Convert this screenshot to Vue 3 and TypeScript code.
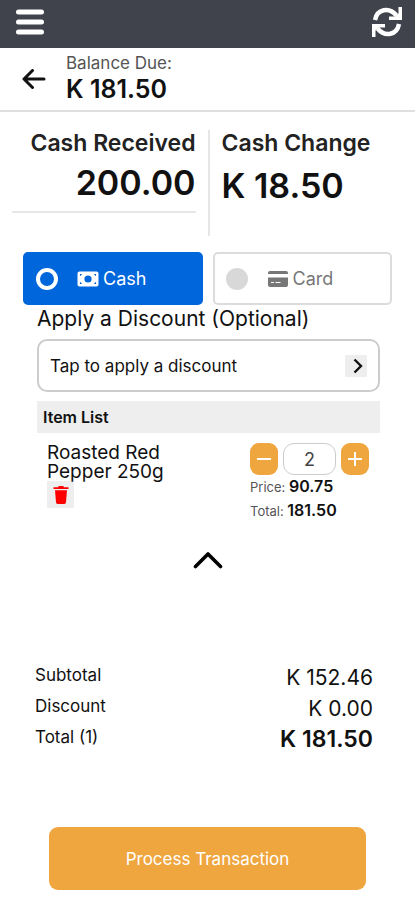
<script setup lang="ts">
import { computed, ref } from 'vue'

const total = 181.5
const price = 90.75
const received = ref('200.00')
const method = ref<'cash' | 'card'>('cash')
const quantity = ref('2')

const change = computed(() => (Number(received.value) - total).toFixed(2))

const summary = [
  { label: 'Subtotal', value: 'K 152.46', strong: false },
  { label: 'Discount', value: 'K 0.00', strong: false },
  { label: 'Total (1)', value: 'K 181.50', strong: true },
]
</script>

<template>
  <div class="page">
    <nav class="topbar">
      <button class="plain" type="button" aria-label="Menu">
        <svg width="28" height="28" viewBox="0 0 28 28">
          <path d="M2.5 4h23M2.5 14h23M2.5 24h23" stroke="#fff" stroke-width="5" stroke-linecap="round" />
        </svg>
      </button>
      <button class="plain" type="button" aria-label="Refresh">
        <svg width="32" height="32" viewBox="0 0 32 32" fill="none" stroke="#fff" stroke-width="4.4">
          <path d="M4 14C6 3 18 .5 25.500 9.500" />
          <path d="M28 18C26 29 14 31.500 6.500 22.500" />
          <path d="M27.500 1H31v13H18v-3.500h6l3.500-3z" fill="#fff" stroke="none" />
          <path d="M4.500 31H1V18h13v3.500H8l-3.500 3z" fill="#fff" stroke="none" />
        </svg>
      </button>
    </nav>

    <header class="balance">
      <button class="plain" type="button" aria-label="Back">
        <svg width="24" height="20" viewBox="0 0 24 20" fill="none" stroke="#111" stroke-width="3" stroke-linecap="round" stroke-linejoin="round">
          <path d="M22 10H2M10.500 1.500L2 10l8.500 8.500" />
        </svg>
      </button>
      <div class="balance-text">
        <div class="balance-label">Balance Due:</div>
        <div class="balance-value">K {{ total.toFixed(2) }}</div>
      </div>
    </header>

    <main>
      <section class="amounts">
        <div class="received">
          <label for="received">Cash Received</label>
          <input id="received" v-model="received" type="text" inputmode="decimal" />
        </div>
        <div class="change">
          <div class="change-label">Cash Change</div>
          <div class="change-value">K {{ change }}</div>
        </div>
      </section>

      <section class="methods">
        <label class="method" :class="{ active: method === 'cash' }">
          <input v-model="method" type="radio" name="method" value="cash" />
          <svg width="22" height="16" viewBox="0 0 22 16">
            <rect x=".5" y=".5" width="21" height="15" rx="2" fill="#fff" />
            <circle cx="11" cy="8" r="3.6" fill="#0066db" />
            <path d="M3 3h2.200L3 5.200zM19 3v2.200L16.800 3zM3 13v-2.200L5.200 13zM19 13h-2.200l2.200-2.200z" fill="#0066db" />
          </svg>
          <span>Cash</span>
        </label>
        <label class="method" :class="{ active: method === 'card' }">
          <input v-model="method" type="radio" name="method" value="card" />
          <svg width="22" height="16" viewBox="0 0 22 16">
            <path d="M1 3V2a2 2 0 0 1 2-2h16a2 2 0 0 1 2 2v1zM1 6.500h20V14a2 2 0 0 1-2 2H3a2 2 0 0 1-2-2z" fill="#777" />
            <path d="M4 11.500h3M8.500 11.500h5" stroke="#fff" stroke-width="1.2" />
          </svg>
          <span>Card</span>
        </label>
      </section>

      <section class="order">
        <h2>Apply a Discount (Optional)</h2>
        <button class="discount" type="button">
          <span>Tap to apply a discount</span>
          <span class="chevron">
            <svg width="10" height="16" viewBox="0 0 10 16" fill="none" stroke="#111" stroke-width="2.4">
              <path d="M1.500 1.500L8 8l-6.500 6.500" />
            </svg>
          </span>
        </button>

        <h3>Item List</h3>
        <div class="item">
          <div class="item-info">
            <div class="item-name">Roasted Red Pepper 250g</div>
            <button class="remove" type="button" aria-label="Remove item">
              <svg width="16" height="18" viewBox="0 0 16 18" fill="#f00">
                <path d="M5 1.200L5.800 0h4.400l.8 1.200h4.500V3H.5V1.200zM2 4.200h12L13 16.300A1.700 1.700 0 0 1 11.300 18H4.700A1.700 1.700 0 0 1 3 16.300z" />
              </svg>
            </button>
          </div>
          <div class="item-amounts">
            <div class="stepper">
              <button type="button" aria-label="Decrease quantity">
                <svg width="14" height="14" viewBox="0 0 14 14"><path d="M0 7h14" stroke="#fff" stroke-width="2" /></svg>
              </button>
              <input v-model="quantity" type="text" inputmode="numeric" aria-label="Quantity" />
              <button type="button" aria-label="Increase quantity">
                <svg width="14" height="14" viewBox="0 0 14 14"><path d="M0 7h14M7 0v14" stroke="#fff" stroke-width="2" /></svg>
              </button>
            </div>
            <div class="prices">
              <div>Price: <b>{{ price.toFixed(2) }}</b></div>
              <div>Total: <b>{{ total.toFixed(2) }}</b></div>
            </div>
          </div>
        </div>
      </section>

      <button class="plain collapse" type="button" aria-label="Collapse">
        <svg width="30" height="18" viewBox="0 0 30 18" fill="none" stroke="#000" stroke-width="3.6" stroke-linecap="round" stroke-linejoin="round">
          <path d="M2.500 15.500L15 3l12.500 12.500" />
        </svg>
      </button>

      <dl class="summary">
        <div v-for="row in summary" :key="row.label">
          <dt>{{ row.label }}</dt>
          <dd :class="{ strong: row.strong }">{{ row.value }}</dd>
        </div>
      </dl>

      <button class="process" type="button">Process Transaction</button>
    </main>
  </div>
</template>

<style>
body {
  background: #fff;
}
</style>

<style scoped>
.page,
.page * {
  box-sizing: border-box;
}
.page {
  color: #111;
  font-family: Inter, 'Liberation Sans', sans-serif;
}
button,
input {
  margin: 0;
  font-family: inherit;
  color: inherit;
}
button {
  border: 0;
  padding: 0;
  cursor: pointer;
}
svg {
  display: block;
}
.plain {
  background: none;
}
.topbar {
  display: flex;
  align-items: center;
  justify-content: space-between;
  height: 48px;
  padding: 0 12px 4px 16px;
  background: #40434c;
}
.balance {
  display: flex;
  align-items: center;
  gap: 20px;
  height: 64px;
  padding: 0 22px;
  border-bottom: 2px solid #e0e0e0;
}
.balance-text {
  padding-bottom: 4px;
}
.balance-label {
  font-size: 17px;
  line-height: 24px;
  color: #555;
}
.balance-value {
  font-size: 25px;
  line-height: 28px;
  font-weight: 600;
}
.amounts {
  display: grid;
  grid-template-columns: 1fr 1fr;
  padding-top: 18px;
}
.received {
  display: flex;
  flex-direction: column;
  padding: 0 12px;
}
.received label,
.change-label {
  font-size: 23px;
  line-height: 26px;
  font-weight: 600;
  color: #222;
}
.received label {
  text-align: right;
}
.received input {
  width: 100%;
  height: 57px;
  padding: 0 0 2px;
  border: 0;
  border-bottom: 2px solid #e6e6e6;
  background: none;
  font-size: 34px;
  font-weight: 600;
  text-align: right;
}
.change {
  height: 106px;
  padding-left: 12px;
  border-left: 2px solid #e6e6e6;
}
.change-value {
  padding-top: 8px;
  font-size: 34px;
  line-height: 44px;
  font-weight: 600;
}
.methods {
  display: grid;
  grid-template-columns: 1fr 1fr;
  gap: 10px;
  padding: 16px 23px 0;
}
.method {
  display: flex;
  align-items: center;
  height: 53px;
  padding: 0 11px;
  border: 2px solid #dcdcdc;
  border-radius: 5px;
  font-size: 18px;
  color: #777;
  cursor: pointer;
}
.method.active {
  border-color: #0066db;
  background: #0066db;
  color: #fff;
}
.method input {
  appearance: none;
  width: 22px;
  height: 22px;
  border-radius: 50%;
  background: #d8d8d8;
}
.method input:checked {
  border: 4px solid #fff;
  background: none;
}
.method svg {
  margin: 0 4px 0 19px;
}
.order {
  padding: 0 35px 0 37px;
}
h2,
h3 {
  margin: 0;
}
h2 {
  font-size: 21px;
  line-height: 28px;
  font-weight: 400;
}
.discount {
  display: flex;
  align-items: center;
  justify-content: space-between;
  width: 100%;
  height: 53px;
  margin-top: 6px;
  padding: 0 11px;
  border: 2px solid #ccc;
  border-radius: 10px;
  background: #fff;
  font-size: 17px;
}
.chevron {
  display: flex;
  align-items: center;
  justify-content: flex-end;
  width: 22px;
  height: 22px;
  padding-right: 4px;
  background: #eee;
}
h3 {
  margin-top: 9px;
  padding: 0 6px;
  background: #eee;
  font-size: 16px;
  line-height: 32px;
  font-weight: 600;
}
.item {
  display: flex;
  justify-content: space-between;
  padding: 10px 11px 0 10px;
}
.item-name {
  width: 140px;
  font-size: 19px;
  line-height: 19px;
}
.remove {
  display: grid;
  place-items: center;
  width: 27px;
  height: 27px;
  background: #eee;
}
.stepper {
  display: flex;
  gap: 5px;
}
.stepper button {
  display: grid;
  place-items: center;
  width: 28px;
  height: 32px;
  border-radius: 9px;
  background: #f0a63f;
}
.stepper input {
  width: 53px;
  height: 32px;
  padding: 0;
  border: 1px solid #ccc;
  border-radius: 11px;
  background: #fff;
  font-size: 18px;
  text-align: center;
  color: #444;
}
.prices {
  font-size: 13px;
  color: #555;
}
.prices div {
  height: 24px;
  line-height: 22px;
}
.prices b {
  font-size: 16px;
  font-weight: 600;
  color: #111;
}
.collapse {
  display: block;
  margin: 28px auto 0;
}
.summary {
  margin: 93px 42px 0 35px;
}
.summary div {
  display: flex;
  justify-content: space-between;
  height: 31px;
}
.summary dt {
  font-size: 17px;
  line-height: 26px;
}
.summary dd {
  margin: 0;
  font-size: 21px;
  line-height: 31px;
}
.summary .strong {
  font-size: 23px;
  font-weight: 600;
}
.process {
  display: block;
  width: calc(100% - 98px);
  height: 63px;
  margin: 72px auto 10px;
  border-radius: 9px;
  background: #f0a63f;
  color: #fff;
  font-size: 17px;
}
</style>
